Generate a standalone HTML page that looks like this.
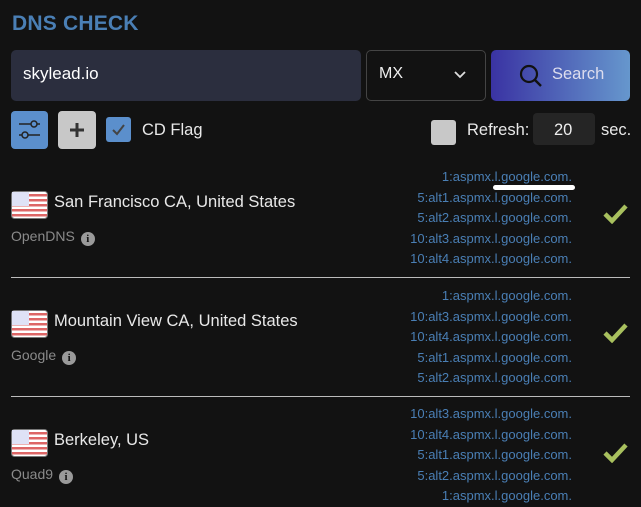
<!DOCTYPE html>
<html><head><meta charset="utf-8"><style>
*{margin:0;padding:0;box-sizing:border-box}
body{width:641px;height:507px;background:#121212;font-family:"Liberation Sans",sans-serif;position:relative;overflow:hidden;color:#eee}
.a{position:absolute}
.title{left:12px;top:12px;font-size:21px;font-weight:bold;color:#4a7fb5;letter-spacing:0.2px}
.rec{right:69px;font-size:13px;color:#4a7fb5;text-align:right;line-height:20.5px}
.name{left:54px;font-size:16.5px;color:#e8e8e8}
.prov{left:11px;font-size:14px;color:#8a8a8a}
.info{display:inline-block;width:14px;height:14px;border-radius:50%;background:#9a9a9a;color:#121212;font-size:11px;font-weight:bold;text-align:center;line-height:14px;vertical-align:-1px;margin-left:6px;font-family:"Liberation Serif",serif}
.div{left:11px;width:619px;height:1px;background:#bbb}
</style></head><body>
<div class="a title">DNS CHECK</div>
<div class="a" style="left:11px;top:50px;width:350px;height:51px;background:#2b2e3e;border-radius:5px"></div>
<div class="a" style="left:23px;top:64px;font-size:17px;color:#fff">skylead.io</div>
<div class="a" style="left:366px;top:50px;width:120px;height:51px;border:1px solid #444;border-radius:5px"></div>
<div class="a" style="left:379px;top:65px;font-size:16px;color:#eee">MX</div>
<svg class="a" style="left:453px;top:70px" width="14" height="10"><path d="M2 2 L7 7 L12 2" stroke="#ddd" stroke-width="1.8" fill="none"/></svg>
<div class="a" style="left:491px;top:50px;width:139px;height:51px;border-radius:5px;background:linear-gradient(90deg,#3a33a3,#6697cd)"></div>
<svg class="a" style="left:518px;top:63px" width="28" height="28"><circle cx="11" cy="11" r="8" stroke="#111" stroke-width="2.2" fill="none"/><path d="M17 17 L23 23" stroke="#111" stroke-width="2.4"/></svg>
<div class="a" style="left:552px;top:65px;font-size:16.5px;color:#dde">Search</div>

<div class="a" style="left:11px;top:111px;width:37px;height:38px;background:#5b8fcc;border-radius:4px"></div>
<svg class="a" style="left:11px;top:111px" width="37" height="38"><path d="M8 13H29M8 24H29" stroke="#222" stroke-width="1.6"/><circle cx="23" cy="13" r="3" fill="#5b8fcc" stroke="#222" stroke-width="1.5"/><circle cx="14" cy="24" r="3" fill="#5b8fcc" stroke="#222" stroke-width="1.5"/></svg>
<div class="a" style="left:58px;top:111px;width:38px;height:38px;background:#c8c8c8;border-radius:4px"></div>
<svg class="a" style="left:58px;top:111px" width="38" height="38"><path d="M19 12V26M12 19H26" stroke="#333" stroke-width="3"/></svg>
<div class="a" style="left:106px;top:117px;width:25px;height:25px;background:#5b8fcc;border-radius:3px"></div>
<svg class="a" style="left:106px;top:117px" width="25" height="25"><path d="M7 13L11 17L18 8" stroke="#444" stroke-width="2" fill="none"/></svg>
<div class="a" style="left:142px;top:121px;font-size:16.5px;color:#e8e8e8">CD Flag</div>
<div class="a" style="left:431px;top:120px;width:25px;height:25px;background:#c8c8c8;border-radius:3px"></div>
<div class="a" style="left:467px;top:121px;font-size:16.5px;color:#e8e8e8">Refresh:</div>
<div class="a" style="left:533px;top:113px;width:62px;height:32px;background:#252525;border-radius:4px"></div>
<div class="a" style="left:554px;top:121px;font-size:16.5px;color:#eee">20</div>
<div class="a" style="left:601px;top:121px;font-size:16.5px;color:#e8e8e8">sec.</div>

<svg width="0" height="0" style="position:absolute"><defs><g id="flag"><rect x="0.5" y="0.5" width="36" height="27" rx="3" fill="#fff" stroke="#777"/><rect x="1" y="3" width="35" height="2.5" fill="#d66"/><rect x="1" y="8" width="35" height="2.5" fill="#d66"/><rect x="1" y="13" width="35" height="2.5" fill="#d66"/><rect x="1" y="18" width="35" height="2.5" fill="#d66"/><rect x="1" y="23" width="35" height="2.5" fill="#d66"/><rect x="1" y="1" width="17" height="14" fill="#dfe2f6"/></g></defs></svg>

<svg class="a" style="left:11px;top:191px" width="37" height="28"><use href="#flag"/></svg>
<div class="a name" style="top:193px">San Francisco CA, United States</div>
<div class="a prov" style="top:228px">OpenDNS<span class="info">i</span></div>
<div class="a rec" style="top:167px">1:aspmx.l.google.com.<br>5:alt1.aspmx.l.google.com.<br>5:alt2.aspmx.l.google.com.<br>10:alt3.aspmx.l.google.com.<br>10:alt4.aspmx.l.google.com.</div>
<div class="a" style="left:493px;top:185px;width:82px;height:5px;background:#fff;border-radius:3px"></div>
<svg class="a" style="left:602px;top:203px" width="27" height="21"><path d="M3 11L10 18L24 3" stroke="#a8c05e" stroke-width="4.5" fill="none"/></svg>
<div class="a div" style="top:277px"></div>

<svg class="a" style="left:11px;top:310px" width="37" height="28"><use href="#flag"/></svg>
<div class="a name" style="top:312px">Mountain View CA, United States</div>
<div class="a prov" style="top:347px">Google<span class="info">i</span></div>
<div class="a rec" style="top:286px">1:aspmx.l.google.com.<br>10:alt3.aspmx.l.google.com.<br>10:alt4.aspmx.l.google.com.<br>5:alt1.aspmx.l.google.com.<br>5:alt2.aspmx.l.google.com.</div>
<svg class="a" style="left:602px;top:322px" width="27" height="21"><path d="M3 11L10 18L24 3" stroke="#a8c05e" stroke-width="4.5" fill="none"/></svg>
<div class="a div" style="top:396px"></div>

<svg class="a" style="left:11px;top:429px" width="37" height="28"><use href="#flag"/></svg>
<div class="a name" style="top:431px">Berkeley, US</div>
<div class="a prov" style="top:466px">Quad9<span class="info">i</span></div>
<div class="a rec" style="top:404px">10:alt3.aspmx.l.google.com.<br>10:alt4.aspmx.l.google.com.<br>5:alt1.aspmx.l.google.com.<br>5:alt2.aspmx.l.google.com.<br>1:aspmx.l.google.com.</div>
<svg class="a" style="left:602px;top:442px" width="27" height="21"><path d="M3 11L10 18L24 3" stroke="#a8c05e" stroke-width="4.5" fill="none"/></svg>
</body></html>
